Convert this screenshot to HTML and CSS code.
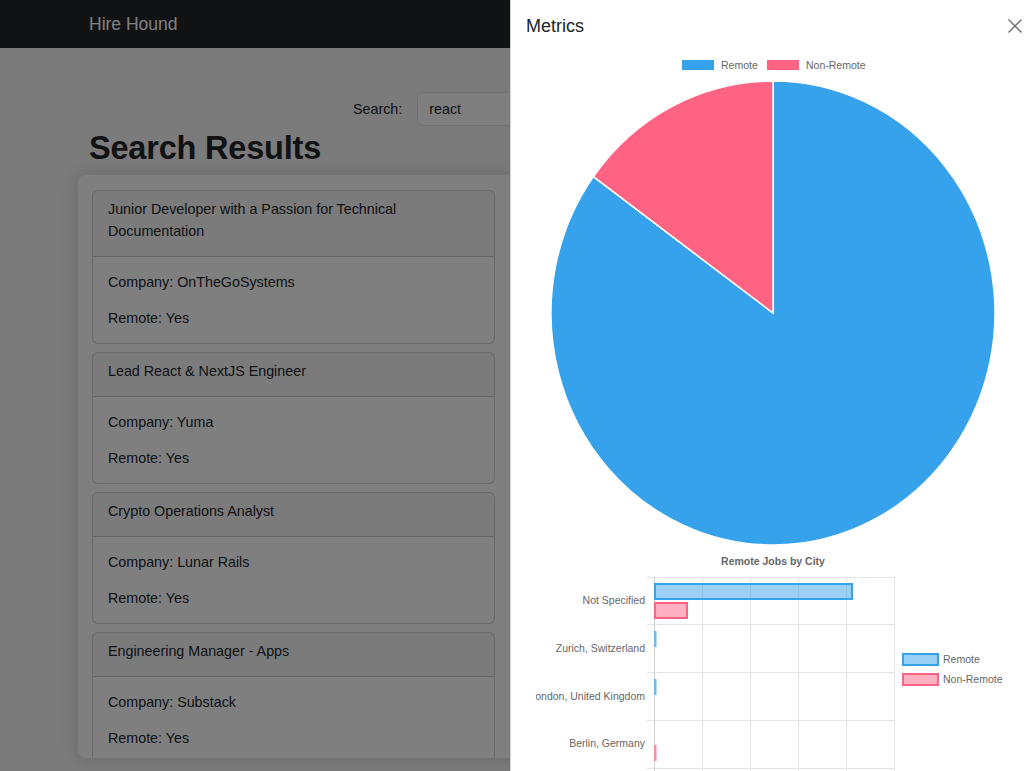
FILE: index.html
```html
<!DOCTYPE html>
<html lang="en">
<head>
<meta charset="utf-8">
<title>Hire Hound</title>
<link rel="stylesheet" href="styles.css">
</head>
<body>
<nav class="navbar">
  <span class="brand">Hire Hound</span>
</nav>

<main class="page">
  <form class="search-row">
    <label class="search-label" for="q">Search:</label>
    <input class="search-input" id="q" type="text" value="react">
  </form>
  <h1 class="page-title">Search Results</h1>

  <section class="results">
    <div class="card">
      <div class="card-header">Junior Developer with a Passion for Technical Documentation</div>
      <div class="card-body">
        <p>Company: OnTheGoSystems</p>
        <p>Remote: Yes</p>
      </div>
    </div>
    <div class="card">
      <div class="card-header">Lead React &amp; NextJS Engineer</div>
      <div class="card-body">
        <p>Company: Yuma</p>
        <p>Remote: Yes</p>
      </div>
    </div>
    <div class="card">
      <div class="card-header">Crypto Operations Analyst</div>
      <div class="card-body">
        <p>Company: Lunar Rails</p>
        <p>Remote: Yes</p>
      </div>
    </div>
    <div class="card">
      <div class="card-header">Engineering Manager - Apps</div>
      <div class="card-body">
        <p>Company: Substack</p>
        <p>Remote: Yes</p>
      </div>
    </div>
  </section>
</main>

<div class="backdrop"></div>

<aside class="offcanvas">
  <div class="offcanvas-header">
    <h5 class="offcanvas-title">Metrics</h5>
    <button class="close-btn" type="button" aria-label="Close">
      <svg width="14" height="14" viewBox="0 0 14 14"><path d="M0.5 0.5 L13.5 13.5 M13.5 0.5 L0.5 13.5" stroke="#6c6c6c" stroke-width="1.4" fill="none"/></svg>
    </button>
  </div>

  <svg class="pie-chart" width="523" height="502" viewBox="511 48 523 502">
    <rect x="682" y="60" width="32" height="10" fill="#36a2eb"/>
    <text x="721" y="69" class="chart-text">Remote</text>
    <rect x="767" y="60" width="32" height="10" fill="#ff6384"/>
    <text x="806" y="69" class="chart-text">Non-Remote</text>
    <path d="M773 313 L773 81 A222 232 0 1 1 593.4 176.6 Z" fill="#36a2eb" stroke="#fff" stroke-width="1.5"/>
    <path d="M773 313 L773 81 A222 232 0 0 0 593.4 176.6 Z" fill="#ff6384" stroke="#fff" stroke-width="1.5"/>
  </svg>

  <svg class="bar-chart" width="523" height="221" viewBox="511 550 523 221">
    <defs><clipPath id="cv"><rect x="536" y="550" width="480" height="221"/></clipPath></defs>
    <text x="773" y="565" class="chart-title" text-anchor="middle">Remote Jobs by City</text>
    <g stroke="#e4e4e4" stroke-width="1">
      <line x1="702.5" y1="577" x2="702.5" y2="771"/>
      <line x1="750.5" y1="577" x2="750.5" y2="771"/>
      <line x1="798.5" y1="577" x2="798.5" y2="771"/>
      <line x1="846.5" y1="577" x2="846.5" y2="771"/>
      <line x1="894.5" y1="577" x2="894.5" y2="771"/>
      <line x1="647" y1="577.5" x2="895" y2="577.5"/>
      <line x1="647" y1="624.5" x2="895" y2="624.5"/>
      <line x1="647" y1="672.5" x2="895" y2="672.5"/>
      <line x1="647" y1="720.5" x2="895" y2="720.5"/>
      <line x1="647" y1="768.5" x2="895" y2="768.5"/>
    </g>
    <line x1="654.5" y1="577" x2="654.5" y2="771" stroke="#cfcfcf" stroke-width="1"/>
    <g class="chart-text" text-anchor="end" clip-path="url(#cv)">
      <text x="645" y="604">Not Specified</text>
      <text x="645" y="652">Zurich, Switzerland</text>
      <text x="645" y="700">London, United Kingdom</text>
      <text x="645" y="747">Berlin, Germany</text>
    </g>
    <rect x="655" y="584" width="197" height="15" fill="rgba(54,162,235,0.5)" stroke="#36a2eb" stroke-width="2"/>
    <rect x="655" y="603" width="32" height="15" fill="rgba(255,99,132,0.5)" stroke="#ff6384" stroke-width="2"/>
    <rect x="654" y="631" width="2.5" height="16" fill="#6fbaf0"/>
    <rect x="654" y="679" width="2.5" height="16" fill="#6fbaf0"/>
    <rect x="654" y="745" width="2.5" height="16" fill="#ff8aa3"/>
    <rect x="903" y="654" width="35" height="11" fill="rgba(54,162,235,0.5)" stroke="#36a2eb" stroke-width="2"/>
    <text x="943" y="663" class="chart-text">Remote</text>
    <rect x="903" y="674" width="35" height="11" fill="rgba(255,99,132,0.5)" stroke="#ff6384" stroke-width="2"/>
    <text x="943" y="683" class="chart-text">Non-Remote</text>
  </svg>
</aside>
</body>
</html>
```
FILE: styles.css
```css
* { box-sizing: border-box; }

html, body {
  margin: 0;
  height: 100%;
  overflow: hidden;
}

body {
  font-family: "Liberation Sans", Arial, Helvetica, sans-serif;
  font-size: 14.3px;
  line-height: 22px;
  color: #212529;
  background: #f6f6f6;
}

.navbar {
  height: 48px;
  background: #212529;
  display: flex;
  align-items: center;
  padding-left: 89px;
}

.brand {
  color: #ffffff;
  font-size: 17.5px;
  line-height: 24px;
}

.page {
  display: flex;
  flex-direction: column;
}

.search-row {
  display: flex;
  align-items: center;
  margin: 44px 0 0 353px;
}

.search-label {
  margin-right: 15px;
}

.search-input {
  width: 240px;
  height: 34px;
  border: 1px solid #dee2e6;
  border-radius: 6px;
  padding: 0 11px;
  font-family: inherit;
  font-size: 14.3px;
  color: #212529;
  background: #fff;
}

.page-title {
  margin: 2px 0 0 89px;
  font-size: 32.5px;
  line-height: 40px;
  font-weight: 700;
  letter-spacing: -0.2px;
}

.results {
  margin: 7px 0 0 78px;
  width: 470px;
  height: 583px;
  padding: 15px 14px;
  background: #ffffff;
  border-radius: 8px;
  box-shadow: 0 0 18px rgba(0, 0, 0, 0.16);
  overflow: hidden;
  display: flex;
  flex-direction: column;
  gap: 8px;
}

.card {
  width: 403px;
  flex-shrink: 0;
  background: #fff;
  border: 1px solid rgba(0, 0, 0, 0.175);
  border-radius: 6px;
  overflow: hidden;
}

.card-header {
  padding: 7px 15px 14px;
  background: rgba(0, 0, 0, 0.03);
  border-bottom: 1px solid rgba(0, 0, 0, 0.175);
}

.card-body {
  padding: 14px 15px;
}

.card-body p {
  margin: 0 0 14px;
}

.card-body p:last-child {
  margin-bottom: 0;
}

.backdrop {
  position: fixed;
  inset: 0;
  background: rgba(0, 0, 0, 0.5);
}

.offcanvas {
  position: fixed;
  top: 0;
  right: 0;
  bottom: 0;
  width: 524px;
  background: #fff;
  border-left: 1px solid rgba(0, 0, 0, 0.175);
  display: flex;
  flex-direction: column;
  overflow: hidden;
}

.offcanvas-header {
  height: 48px;
  display: flex;
  align-items: center;
  justify-content: space-between;
  padding: 4px 12px 0 15px;
}

.offcanvas-title {
  margin: 0;
  font-size: 18px;
  line-height: 22px;
  font-weight: 400;
  color: #212529;
}

.close-btn {
  border: 0;
  background: transparent;
  padding: 0;
  width: 14px;
  height: 14px;
  display: flex;
}

.pie-chart, .bar-chart {
  display: block;
  flex-shrink: 0;
}

.chart-text {
  font-family: "Liberation Sans", Arial, sans-serif;
  font-size: 10.5px;
  fill: #666666;
}

.chart-title {
  font-family: "Liberation Sans", Arial, sans-serif;
  font-size: 10.5px;
  font-weight: 700;
  fill: #666666;
}
```
